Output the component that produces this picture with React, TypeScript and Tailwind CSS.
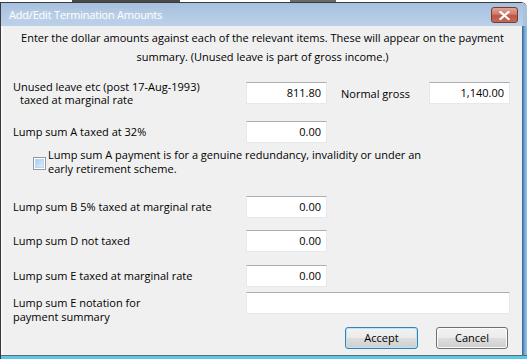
import React from "react";

const font = { fontFamily: '"Open Sans", "Liberation Sans", sans-serif' };

function Amount({ value, wide }: { value: string; wide?: boolean }) {
  return (
    <div
      className={
        "h-[22px] shrink-0 bg-white border border-[#e3e9ef] border-t-[#abadb3] flex items-center justify-end pr-[5px] text-[11px] text-black " +
        (wide ? "w-[264px]" : "w-[81px]")
      }
    >
      {value}
    </div>
  );
}

function Row({ label, value, top }: { label: string; value: string; top: string }) {
  return (
    <div className={"flex items-center " + top}>
      <div className="w-[233px] shrink-0 leading-[14px]">{label}</div>
      <Amount value={value} />
    </div>
  );
}

function WinButton({ label, primary }: { label: string; primary?: boolean }) {
  return (
    <button
      className={
        "h-[22px] rounded-[3px] border text-[11px] text-black flex items-center justify-center " +
        "bg-[linear-gradient(to_bottom,#f2f2f2_0%,#ebebeb_50%,#dddddd_51%,#cfcfcf_100%)] " +
        (primary
          ? "w-[73px] border-[#3c7fb1] shadow-[inset_0_0_0_1px_#b6e6fb]"
          : "w-[72px] border-[#707070] shadow-[inset_0_0_0_1px_#fbfbfb]")
      }
    >
      {label}
    </button>
  );
}

export default function App() {
  return (
    <div className="w-[532px] h-[361px] bg-white overflow-hidden text-[11px] text-black" style={font}>
      {/* glimpse of the window behind */}
      <div className="h-[2px] flex">
        <div className="ml-[72px] w-[108px] bg-[#4a4a4a]" />
        <div className="ml-[110px] w-[46px] bg-[#6a6a6a]" />
      </div>

      <div className="w-[527px] h-[357px] flex flex-col border-l border-t border-[#3a3a3a] rounded-tr-[6px] overflow-hidden">
        {/* title bar */}
        <div className="h-[23px] shrink-0 flex items-center justify-between pl-[8px] pr-[5px] bg-[linear-gradient(to_bottom,#a6c0de,#bcd1e9)] border-r-[4px] border-[#aac2dc]">
          <span className="text-[11px] tracking-[-0.2px] text-white [text-shadow:0_0_6px_rgba(255,255,255,0.6)] pt-[1px]">
            Add/Edit Termination Amounts
          </span>
          <div className="mt-[1px] w-[27px] h-[16px] rounded-[3px] border border-[#7a3a30] bg-[linear-gradient(to_bottom,#e0a597_0%,#cf7a68_45%,#bd5441_55%,#c46c59_100%)] flex items-center justify-center">
            <svg width="11" height="9" viewBox="0 0 11 9">
              <path d="M1.5 1 L9.5 8 M9.5 1 L1.5 8" stroke="#ffffff" strokeWidth="2.2" strokeLinecap="square" />
            </svg>
          </div>
        </div>

        {/* client area */}
        <div className="flex-1 flex">
          <div className="w-[2px] bg-[#f7f7f7]" />
          <div className="w-[519px] bg-[#f0f0f0] flex flex-col pl-[10px] pr-[14px]">
            <p className="pt-[2px] leading-[19px] text-center -ml-[10px] -mr-[14px] whitespace-nowrap">
              Enter the dollar amounts against each of the relevant items. These will appear on the payment
              <br />
              summary. (Unused leave is part of gross income.)
            </p>

            <div className="flex items-start mt-[16px]">
              <div className="w-[233px] shrink-0 leading-[13px] -mt-[2px]">
                Unused leave etc (post 17-Aug-1993)
                <br />
                <span className="pl-[7px]">taxed at marginal rate</span>
              </div>
              <Amount value="811.80" />
              <div className="w-[102px] shrink-0 pl-[14px] self-center">Normal gross</div>
              <div className="w-[80px]">
                <Amount value="1,140.00" />
              </div>
            </div>

            <Row label="Lump sum A taxed at 32%" value="0.00" top="mt-[15px]" />

            <div className="flex items-center mt-[5px] pl-[20px] gap-[2px]">
              <div className="w-[13px] h-[13px] shrink-0 border border-[#8e9aa8] bg-white p-[1px] mt-[2px]">
                <div className="w-full h-full border border-[#c2d6ea] bg-[linear-gradient(135deg,#a9cdee,#dcecfa)]" />
              </div>
              <div className="leading-[14px]">
                Lump sum A payment is for a genuine redundancy, invalidity or under an
                <br />
                early retirement scheme.
              </div>
            </div>

            <Row label="Lump sum B 5% taxed at marginal rate" value="0.00" top="mt-[20px]" />
            <Row label="Lump sum D not taxed" value="0.00" top="mt-[12px]" />
            <Row label="Lump sum E taxed at marginal rate" value="0.00" top="mt-[13px]" />

            <div className="flex items-start mt-[5px]">
              <div className="w-[233px] shrink-0 leading-[14px] pt-[4px]">
                Lump sum E notation for
                <br />
                payment summary
              </div>
              <Amount value="" wide />
            </div>

            <div className="flex justify-end gap-[18px] mt-[3px]">
              <WinButton label="Accept" primary />
              <WinButton label="Cancel" />
            </div>
          </div>
          <div className="w-[5px] bg-[linear-gradient(to_right,#2f5f8f,#6ea6d6,#9cc4e6)]" />
        </div>
        <div className="h-[1px] bg-[#5a6b7a]" />
        <div className="h-[3px] bg-[#5cc6e6]" />
      </div>
    </div>
  );
}
